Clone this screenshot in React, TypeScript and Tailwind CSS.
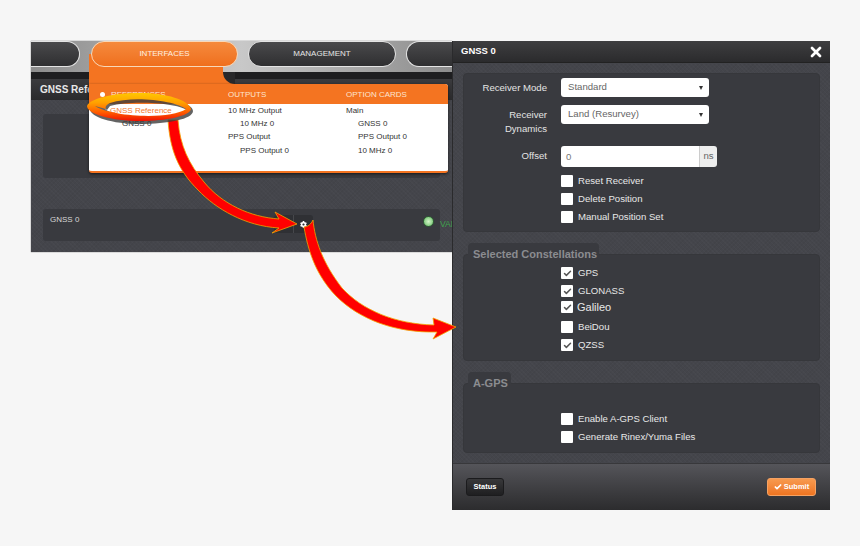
import { Check, X } from 'lucide-react';
import { FaCog } from 'react-icons/fa';

const texture =
  'bg-[#44454b] bg-[repeating-linear-gradient(45deg,rgba(255,255,255,0.015)_0px,rgba(255,255,255,0.015)_1px,transparent_1px,transparent_3px),repeating-linear-gradient(-45deg,rgba(0,0,0,0.035)_0px,rgba(0,0,0,0.035)_1px,transparent_1px,transparent_3px)]';

function NavPill({ label, className }: { label?: string; className: string }) {
  return (
    <div
      className={`h-[26px] shrink-0 rounded-[13px] border border-[#e4e4e4] bg-gradient-to-b from-[#4a4a4c] to-[#2f2f31] flex items-center justify-center text-[8px] text-[#e6e6e6] ${className}`}
    >
      {label}
    </div>
  );
}

function Box({ checked, className = '' }: { checked?: boolean; className?: string }) {
  return (
    <span className={`w-3 h-3 shrink-0 bg-white rounded-[1px] flex items-center justify-center ${className}`}>
      {checked && <Check className="w-[9px] h-[9px] text-[#555]" strokeWidth={4} />}
    </span>
  );
}

function CheckRow({ label, checked, gap = 'gap-[5px]', className = 'text-[9.6px]' }: { label: string; checked?: boolean; gap?: string; className?: string }) {
  return (
    <div className={`flex items-center ${gap} h-3 text-[#e8e8e8] ${className}`}>
      <Box checked={checked} />
      <span>{label}</span>
    </div>
  );
}

function Select({ value }: { value: string }) {
  return (
    <div className="w-[148px] h-[19px] bg-white rounded-[3px] flex items-center justify-between pl-[7px] pr-[6px] text-[9.6px] text-[#666]">
      <span>{value}</span>
      <span className="w-0 h-0 border-x-[2.5px] border-x-transparent border-t-[4px] border-t-[#333]" />
    </div>
  );
}

function FieldLabel({ children }: { children: React.ReactNode }) {
  return <div className="w-[83px] text-right text-[9.6px] leading-[13.5px] text-[#e4e4e4]">{children}</div>;
}

function Panel({ className, children }: { className: string; children?: React.ReactNode }) {
  return <div className={`mx-[10px] rounded-[4px] bg-[#393a3f] border border-[#36373b] ${className}`}>{children}</div>;
}

function TabPanel({ title, tabClass, className, children }: { title: string; tabClass: string; className: string; children: React.ReactNode }) {
  return (
    <div className="relative">
      <div className={`absolute left-[15px] top-0 h-[24px] rounded-t-[4px] bg-[#393a3f] pl-[5px] text-[11px] font-bold leading-[22px] text-[#8b8c90] ${tabClass}`}>
        {title}
      </div>
      <div className="h-[11px]" />
      <Panel className={className}>{children}</Panel>
    </div>
  );
}

function Arrows() {
  return (
    <svg className="absolute left-0 top-0 pointer-events-none" width="860" height="546" viewBox="0 0 860 546" fill="none">
      <defs>
        <linearGradient id="ring" x1="0" y1="0" x2="0" y2="1">
          <stop offset="0" stopColor="#ffc800" />
          <stop offset="0.35" stopColor="#ffa000" />
          <stop offset="0.7" stopColor="#ff5a00" />
          <stop offset="1" stopColor="#ee1000" />
        </linearGradient>
      </defs>
      {/* first arrow */}
      <path
        d="M168 120 C170 150 178 170 198 190 C216 209 245 226 279 228 L272 233 L297 224 L275 212 L279 219 C250 217 222 204 204 182 C189 164 180 146 178 120 Z"
        fill="#ff0000"
        stroke="#f2a400"
        strokeWidth="0.8"
      />
      {/* second arrow */}
      <path
        d="M313 220 C315 240 322 262 342 288 C362 310 395 324 434 325 L433 318 L456 327 L433 339 L437 332 C396 333 360 320 336 296 C315 274 308 250 304 227 C308 227 311 224 313 220 Z"
        fill="#ff0000"
        stroke="#f2a400"
        strokeWidth="0.8"
      />
      {/* ring round the menu entry */}
      <path
        d="M90 109 C90 102 112 96 140 96 C168 96 193 103 193 111 C193 119 168 124 140 124 C112 124 90 117 90 109 Z M104 108 C118 122 178 120 187 110 C176 103 132 100 110 106 L107 110 Z"
        fill="#3c3c3c"
        fillOpacity="0.8"
        fillRule="evenodd"
      />
      <path
        d="M87 106 C89 99 112 93 140 93 C166 93 189 100 191 109 C190 116 166 121 140 121 C112 121 87 114 87 106 Z M95 106 C112 117 170 120 186 109 C176 101 134 95 110 103 C106 105 105 107 106 109 Z"
        fill="url(#ring)"
        fillRule="evenodd"
      />
    </svg>
  );
}

export default function App() {
  return (
    <div className="relative w-[860px] h-[546px] overflow-hidden bg-[#f6f6f6] pt-[41px] pl-[31px] flex items-start font-['Liberation_Sans',Arial,sans-serif]">
      {/* background page */}
      <div className="relative w-[421px] h-[211px] overflow-hidden bg-[#44454b] flex flex-col shadow-[0_0_1px_#555]">
        <div className="h-[31px] shrink-0 bg-[linear-gradient(90deg,#8c8c8c,#c8c8c8_50%,#8c8c8c)] flex items-start gap-[10px] overflow-hidden">
          <NavPill className="w-[49px] rounded-l-none border-l-0" />
          <NavPill className="w-[148px] invisible" />
          <NavPill label="MANAGEMENT" className="w-[148px]" />
          <NavPill className="w-[60px] rounded-r-none border-r-0" />
        </div>
        <div className="h-[7px] shrink-0 bg-[#1e1e20]" />
        <div className="h-[21px] shrink-0 bg-gradient-to-b from-[#3b3b3e] to-[#2a2a2c] pl-[9px] text-[10px] font-bold leading-[21px] text-[#e8e8e8]">
          GNSS Refe
        </div>
        <div className={`flex-1 pt-[14px] ${texture}`}>
          <div className="mx-[12px] h-[64px] rounded-[3px] bg-[#393a3f]" />
          <div className="mx-[12px] mt-[31px] h-[32px] rounded-[3px] bg-[#393a3f] flex items-center relative">
            <span className="absolute left-[7px] top-[5px] text-[8px] text-[#d8d8d8]">GNSS 0</span>
            <div className="absolute left-[231px] top-[6px] w-[39px] h-[18px] rounded-[3px] bg-[#2f3034] flex justify-end">
              <span className="w-[20px] h-[18px] border-l border-[#47484c] flex items-center justify-center">
                <FaCog className="w-[7px] h-[7px] text-white" />
              </span>
            </div>
            <span className="absolute left-[380px] top-[7px] w-[11px] h-[11px] rounded-full border border-[#2f5d34] bg-[radial-gradient(circle,#d4f5c8,#62bb62)]" />
            <span className="absolute left-[397px] top-[9px] text-[8.5px] text-[#3fa34d]">VAL</span>
          </div>
        </div>
      </div>

      {/* open menu */}
      <div className="absolute left-[89px] top-[41px] w-[359px] h-[132px]">
        <div className="absolute left-[2px] top-0 w-[147px] h-[26px] z-10 rounded-[13px] border border-[#f8d8b8] bg-gradient-to-b from-[#f58a3c] to-[#ef6f1c] flex items-center justify-center text-[8px] text-[#fff0e0]">
          INTERFACES
        </div>
        <div className="absolute left-0 top-[13px] w-[134px] h-[30px] bg-[#f47421]" />
        {/* inverse corner where the tab runs into the menu */}
        <div className="absolute left-[134px] top-[31px] w-[12px] h-[12px] bg-[#f47421]">
          <div className="w-[12px] h-[12px] rounded-bl-[12px] bg-[#28282a]" />
        </div>
        <div className="absolute left-0 top-[43px] w-[359px] h-[89px] rounded-b-[3px] rounded-tr-[3px] bg-white border-b-[2px] border-[#f47421] shadow-[0_1px_3px_rgba(0,0,0,0.6)]">
          <div className="h-[20px] bg-[#f47421] rounded-tr-[3px] grid grid-cols-[139px_118px_1fr] text-[8px] leading-[21px] text-[#fde4d0]">
            <div className="pl-[21px] flex items-center gap-[6px]">
              <span className="-ml-[10px] w-[5px] h-[5px] rounded-full bg-white" />
              <span>REFERENCES</span>
            </div>
            <div>OUTPUTS</div>
            <div>OPTION CARDS</div>
          </div>
          <div className="grid grid-cols-[139px_118px_1fr] -mt-[0.5px] text-[8px] leading-[13.4px] text-[#333]">
            <div className="pl-[21px]">
              <div className="text-[#f47a30]">GNSS Reference</div>
              <div className="pl-[12px]">GNSS 0</div>
            </div>
            <div>
              <div>10 MHz Output</div>
              <div className="pl-[12px]">10 MHz 0</div>
              <div>PPS Output</div>
              <div className="pl-[12px]">PPS Output 0</div>
            </div>
            <div>
              <div>Main</div>
              <div className="pl-[12px]">GNSS 0</div>
              <div className="pl-[12px]">PPS Output 0</div>
              <div className="pl-[12px]">10 MHz 0</div>
            </div>
          </div>
        </div>
      </div>

      {/* modal */}
      <div className={`relative w-[378px] h-[469px] flex flex-col border-l border-[#2a2a2c] ${texture}`}>
        <div className="h-[22px] shrink-0 bg-gradient-to-b from-[#3e3e40] to-[#2b2b2d] border-b border-[#222] flex items-center justify-between pl-[8px] pr-[6px] text-[9.5px] font-bold text-white">
          <span>GNSS 0</span>
          <X className="w-[16px] h-[16px] text-white" strokeWidth={4} />
        </div>

        <Panel className="mt-[10px] h-[159px] pt-[4px]">
          <div className="flex items-start gap-[14px]">
            <FieldLabel><div className="pt-[3px]">Receiver Mode</div></FieldLabel>
            <Select value="Standard" />
          </div>
          <div className="flex items-start gap-[14px] mt-[8px]">
            <FieldLabel><div className="pt-[3px]">Receiver<br />Dynamics</div></FieldLabel>
            <Select value="Land (Resurvey)" />
          </div>
          <div className="flex items-start gap-[14px] mt-[11px]">
            <FieldLabel><div className="pt-[3px]">Offset</div></FieldLabel>
            <div className="flex h-[21px] w-[156px] rounded-[3px] overflow-hidden text-[9.6px]">
              <div className="w-[138px] bg-white pl-[5px] leading-[21px] text-[#777]">0</div>
              <div className="w-[18px] bg-[#eeeeee] border-l border-[#ccc] text-center leading-[20px] text-[#666]">ns</div>
            </div>
          </div>
          <div className="pl-[97px] pt-[8px] flex flex-col gap-[6px]">
            <CheckRow label="Reset Receiver" />
            <CheckRow label="Delete Position" />
            <CheckRow label="Manual Position Set" />
          </div>
        </Panel>

        <div className="mt-[11px]">
          <TabPanel title="Selected Constellations" tabClass="w-[131px]" className="h-[107px] pt-[12px] pl-[97px]">
            <div className="flex flex-col">
              <CheckRow label="GPS" checked />
              <CheckRow label="GLONASS" checked className="mt-[6px] text-[9.6px]" />
              <CheckRow label="Galileo" checked gap="gap-[4px]" className="mt-[4px] text-[11px]" />
              <CheckRow label="BeiDou" className="mt-[8px] text-[9.6px]" />
              <CheckRow label="QZSS" checked className="mt-[6px] text-[9.6px]" />
            </div>
          </TabPanel>
        </div>

        <div className="mt-[11px]">
          <TabPanel title="A-GPS" tabClass="w-[43px]" className="h-[70px] pt-[29px] pl-[97px]">
            <div className="flex flex-col gap-[6px]">
              <CheckRow label="Enable A-GPS Client" />
              <CheckRow label="Generate Rinex/Yuma Files" />
            </div>
          </TabPanel>
        </div>

        <div className="mt-auto h-[47px] shrink-0 bg-gradient-to-b from-[#55555a] to-[#2c2c2e] border-t border-[#38383b] flex items-center justify-between pl-[13px] pr-[14px]">
          <div className="w-[38px] h-[18px] rounded-[3px] bg-gradient-to-b from-[#38383a] to-[#1f1f21] border border-[#1b1b1d] flex items-center justify-center text-[7.5px] font-bold text-white">
            Status
          </div>
          <div className="w-[49px] h-[18px] rounded-[3px] bg-gradient-to-b from-[#f79a4e] to-[#ee7420] border border-[#f5a263] flex items-center justify-center gap-[2px] text-[7.5px] font-bold text-white">
            <Check className="w-[8px] h-[8px]" strokeWidth={5} />
            Submit
          </div>
        </div>
      </div>

      <Arrows />
    </div>
  );
}
